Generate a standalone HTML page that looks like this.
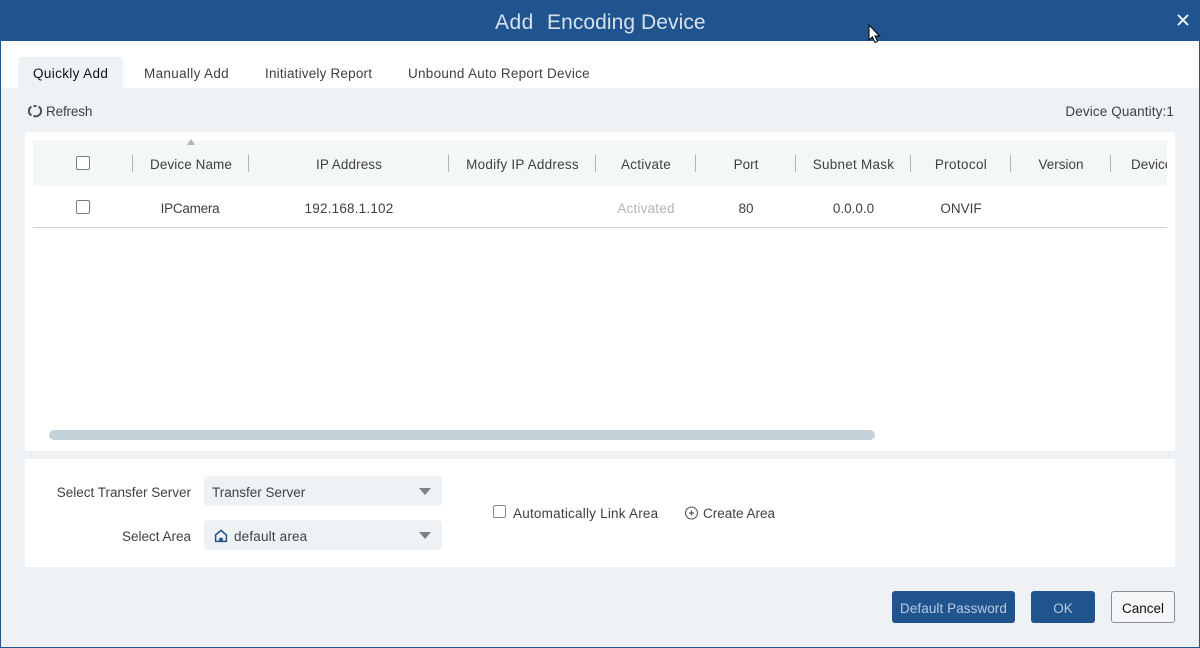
<!DOCTYPE html>
<html><head><meta charset="utf-8"><style>
html,body{margin:0;padding:0;width:1200px;height:648px;overflow:hidden;background:#eef2f5;font-family:"Liberation Sans",sans-serif;font-size:13.5px;color:#404040}
div,span{position:absolute;box-sizing:border-box}
.t{white-space:nowrap;line-height:18px;height:18px}
.c{text-align:center}
.r{text-align:right}
.sep{width:1px;height:17px;top:155px;background:#b0b4b8}
.cb{width:14px;height:14px;border:1px solid #7c7c7c;border-radius:2px;background:#fff}
.sel{left:204px;width:238px;height:30px;background:#eef2f5;border-radius:4px}
.arrow{left:215px;top:12px;width:0;height:0;border-left:6px solid transparent;border-right:6px solid transparent;border-top:7px solid #808080}
.btn{top:591px;height:32px;border-radius:3px;background:#20548f;color:#b9cbe0;text-align:center;line-height:35px}
</style></head><body>
<div style="left:0;top:0;width:1200px;height:648px;background:#eef2f5;border:1px solid #20548f;border-top:0"></div>
<div style="left:0;top:0;width:1200px;height:41px;background:#20548f"></div>
<div class="t" style="left:495px;top:11px;height:24px;line-height:24px;font-size:21px;letter-spacing:.5px;color:#d7e1ee">Add</div>
<div class="t" style="left:547px;top:11px;height:24px;line-height:24px;font-size:21px;letter-spacing:.07px;color:#d7e1ee">Encoding Device</div>
<svg style="position:absolute;left:1176px;top:13px" width="14" height="14" viewBox="0 0 14 14"><path d="M2 2L12 12M12 2L2 12" stroke="#fff" stroke-width="1.9" fill="none"/></svg>
<div style="left:1px;top:41px;width:1198px;height:47px;background:#fff"></div>
<div style="left:18px;top:57px;width:105px;height:31px;background:#eef2f5;border-radius:3px 3px 0 0"></div>
<div class="t" style="left:33px;top:65px;color:#111;letter-spacing:.36px">Quickly Add</div>
<div class="t" style="left:144px;top:65px;letter-spacing:.33px">Manually Add</div>
<div class="t" style="left:265px;top:65px;letter-spacing:.19px">Initiatively Report</div>
<div class="t" style="left:408px;top:65px;letter-spacing:.27px">Unbound Auto Report Device</div>
<svg style="position:absolute;left:28px;top:104px" width="14" height="14" viewBox="0 0 14 14"><path d="M3.5 2.6A5 5 0 0 0 3.5 11.4M5.5 11.8A5 5 0 0 0 10.5 11.4A5 5 0 0 0 10.5 2.6M8.5 2.2A5 5 0 0 0 5.5 2.2" stroke="#505050" stroke-width="2" fill="none"/></svg>
<div class="t" style="left:46px;top:103px;letter-spacing:-.15px">Refresh</div>
<div class="t r" style="left:974px;width:200px;top:103px;letter-spacing:.12px">Device Quantity:1</div>
<div style="left:25px;top:132px;width:1150px;height:319px;background:#fff"></div>
<div style="left:33px;top:140px;width:1134px;height:46px;background:#f4f7f8"></div>
<div style="left:187px;top:139px;width:0;height:0;border-left:4.5px solid transparent;border-right:4.5px solid transparent;border-bottom:6px solid #b5b0b0"></div>
<div class="cb" style="left:76px;top:156px"></div>
<div class="sep" style="left:132px"></div>
<div class="t c" style="left:133px;width:116px;top:156px;letter-spacing:.08px">Device Name</div>
<div class="sep" style="left:248px"></div>
<div class="t c" style="left:249px;width:200px;top:156px;letter-spacing:.1px">IP Address</div>
<div class="sep" style="left:448px"></div>
<div class="t c" style="left:449px;width:147px;top:156px;letter-spacing:.24px">Modify IP Address</div>
<div class="sep" style="left:595px"></div>
<div class="t c" style="left:596px;width:100px;top:156px;letter-spacing:.25px">Activate</div>
<div class="sep" style="left:695px"></div>
<div class="t c" style="left:696px;width:100px;top:156px">Port</div>
<div class="sep" style="left:795px"></div>
<div class="t c" style="left:796px;width:115px;top:156px;letter-spacing:.25px">Subnet Mask</div>
<div class="sep" style="left:910px"></div>
<div class="t c" style="left:911px;width:100px;top:156px;letter-spacing:.35px">Protocol</div>
<div class="sep" style="left:1010px"></div>
<div class="t c" style="left:1011px;width:100px;top:156px">Version</div>
<div class="sep" style="left:1110px"></div>
<div style="left:1111px;top:156px;width:56px;height:18px;overflow:hidden"><div class="t" style="left:20px;top:0">Device</div></div>
<div class="cb" style="left:76px;top:200px"></div>
<div class="t c" style="left:132px;width:116px;top:200px;letter-spacing:-.25px">IPCamera</div>
<div class="t c" style="left:249px;width:200px;top:200px;letter-spacing:.2px">192.168.1.102</div>
<div class="t c" style="left:596px;width:100px;top:200px;color:#b4b4b4;letter-spacing:.2px">Activated</div>
<div class="t c" style="left:696px;width:100px;top:200px">80</div>
<div class="t c" style="left:796px;width:115px;top:200px">0.0.0.0</div>
<div class="t c" style="left:911px;width:100px;top:200px">ONVIF</div>
<div style="left:33px;top:227px;width:1134px;height:1px;background:#ccd2d8"></div>
<div style="left:49px;top:430px;width:826px;height:10px;background:#c3d1d8;border-radius:5px"></div>
<div style="left:25px;top:459px;width:1150px;height:108px;background:#fff"></div>
<div class="t r" style="left:0;width:191px;top:484px">Select Transfer Server</div>
<div class="sel" style="top:476px"><div class="arrow"></div></div>
<div class="t" style="left:212px;top:484px">Transfer Server</div>
<div class="t r" style="left:0;width:191px;top:528px">Select Area</div>
<div class="sel" style="top:520px"><div class="arrow"></div></div>
<svg style="position:absolute;left:214px;top:529px" width="14" height="14" viewBox="0 0 14 14"><path d="M1.6 6L7 1.4L12.4 6V12.4H1.6Z" stroke="#20548f" stroke-width="1.5" fill="none"/><rect x="5.2" y="8.8" width="3.6" height="3.6" fill="#20548f"/></svg>
<div class="t" style="left:234px;top:528px;letter-spacing:.17px">default area</div>
<div class="cb" style="left:493px;top:505px;width:13px;height:13px;border-color:#8a8a8a"></div>
<div class="t" style="left:513px;top:505px;letter-spacing:.22px">Automatically Link Area</div>
<svg style="position:absolute;left:684px;top:506px" width="14" height="14" viewBox="0 0 14 14"><circle cx="7.5" cy="7" r="6" stroke="#555" stroke-width="1.1" fill="none"/><path d="M5 7H10M7.5 4.5V9.5" stroke="#555" stroke-width="1.3"/></svg>
<div class="t" style="left:703px;top:505px">Create Area</div>
<div class="btn" style="left:892px;width:123px;letter-spacing:.07px">Default Password</div>
<div class="btn" style="left:1031px;width:64px">OK</div>
<div class="btn" style="left:1111px;width:64px;background:#f4f6f8;border:1px solid #8c8f94;color:#111;line-height:33px">Cancel</div>
<svg style="position:absolute;left:868px;top:24px" width="13" height="20" viewBox="0 0 13 20"><path d="M1 1V16L4.5 12.8L7 18.5L9.5 17.4L7 12H11.5Z" fill="#fff" stroke="#000" stroke-width="1"/></svg>
</body></html>
